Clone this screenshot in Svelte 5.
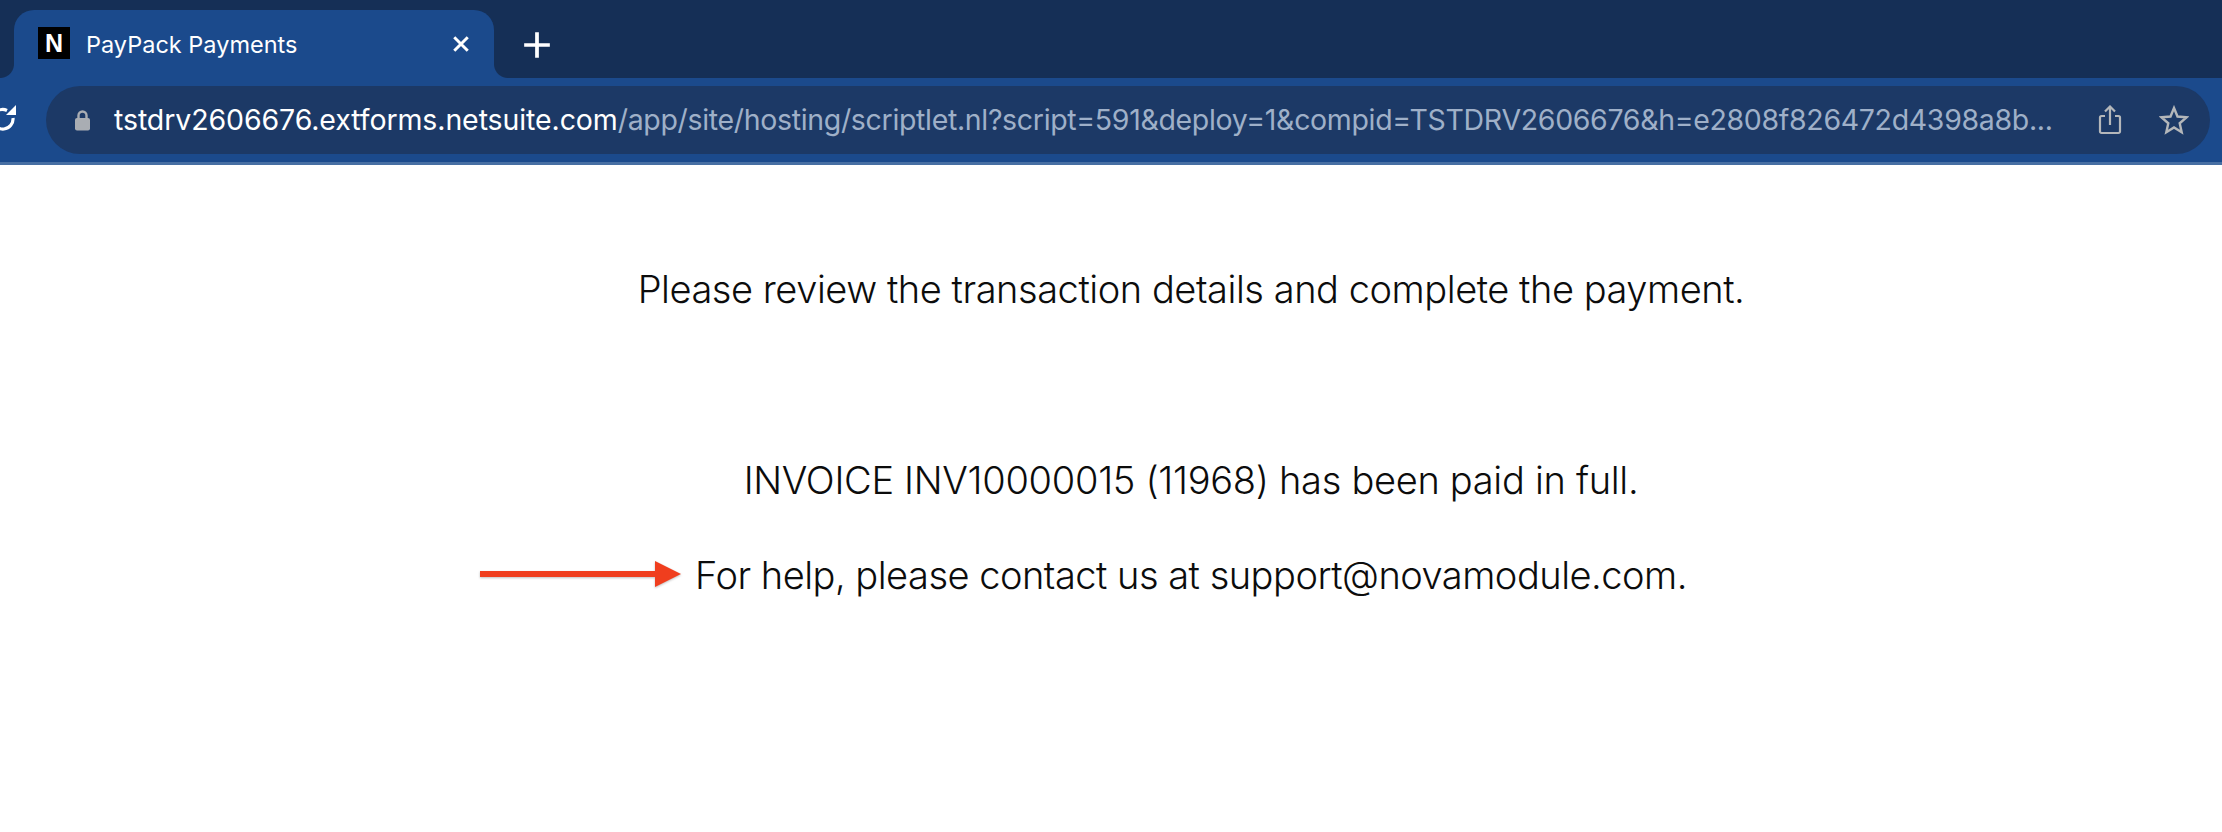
<script>
  const host = 'tstdrv2606676.extforms.netsuite.com';
  const path = '/app/site/hosting/scriptlet.nl?script=591&deploy=1&compid=TSTDRV2606676&h=e2808f826472d4398a8b...';
</script>

<div class="page">
  <header class="strip">
    <div class="tab">
      <span class="favicon">N</span>
      <span class="title">PayPack Payments</span>
      <svg class="close" viewBox="0 0 16 16"><path d="M2 2L14 14M14 2L2 14" /></svg>
    </div>
    <svg class="plus" viewBox="0 0 24 24"><path d="M12 1V23M1 12H23" /></svg>
  </header>
  <div class="toolbar">
    <svg class="reload" viewBox="0 0 18 30">
      <path class="ring" d="M13 15A10 10 0 0 1 -7 17" />
      <path class="ring" d="M-5 10A10 10 0 0 1 7 7.500" />
      <path class="head" d="M6 12H16V2Z" />
    </svg>
    <div class="omnibox">
      <svg class="lock" viewBox="0 0 17 22">
        <path class="shackle" d="M4.500 10V6.500A4 4 0 0 1 12.500 6.500V10" />
        <rect x="1" y="9" width="15" height="12.500" rx="2" />
      </svg>
      <span class="url"><b>{host}</b><span class="path">{path}</span></span>
      <svg class="share" viewBox="0 0 24 30">
        <path d="M7 11H3.500A1.500 1.500 0 0 0 2 12.500V26.500A1.500 1.500 0 0 0 3.500 28H20.500A1.500 1.500 0 0 0 22 26.500V12.500A1.500 1.500 0 0 0 20.500 11H17" />
        <path d="M12 20V2M7 6.500L12 1.500L17 6.500" />
      </svg>
      <svg class="star" viewBox="0 0 30 30">
        <path d="M15 3L18.500 11.500L27.500 12.300L20.700 18.300L22.700 27.200L15 22.500L7.300 27.200L9.300 18.300L2.500 12.300L11.500 11.500Z" />
      </svg>
    </div>
  </div>
  <main class="content">
    <p class="intro">Please review the transaction details and complete the payment.</p>
    <p class="paid">INVOICE INV10000015 (11968) has been paid in full.</p>
    <p class="help">
      <svg class="arrow" viewBox="0 0 202 28">
        <path class="shaft" d="M0 14H176" />
        <path class="tip" d="M175 1L201 14L175 27Z" />
      </svg>
      For help, please contact us at support@novamodule.com.
    </p>
  </main>
</div>

<style>
  :global(body) {
    margin: 0;
    background: #ffffff;
  }
  .page {
    font-family: Inter, "Liberation Sans", sans-serif;
    height: 832px;
    overflow: hidden;
  }
  .strip {
    box-sizing: border-box;
    height: 78px;
    background: #152f56;
    padding: 10px 0 0 14px;
    display: flex;
    align-items: center;
  }
  .tab {
    box-sizing: border-box;
    width: 480px;
    height: 68px;
    align-self: flex-end;
    position: relative;
    background: #1b4a8c;
    border-radius: 20px 20px 0 0;
    display: flex;
    align-items: center;
    padding: 0 24px;
    color: #fff;
  }
  .tab::before,
  .tab::after {
    content: "";
    position: absolute;
    bottom: 0;
    width: 14px;
    height: 14px;
  }
  .tab::before {
    left: -14px;
    background: radial-gradient(circle at 0 0, #152f56 13.500px, #1b4a8c 14.500px);
  }
  .tab::after {
    right: -14px;
    background: radial-gradient(circle at 100% 0, #152f56 13.500px, #1b4a8c 14.500px);
  }
  .favicon {
    height: 32px;
    width: 32px;
    margin-top: -2px;
    background: #000;
    color: #fff;
    font: 700 25px "Liberation Sans", sans-serif;
    display: flex;
    align-items: center;
    justify-content: center;
    flex: none;
  }
  .title {
    margin-left: 16px;
    font-size: 23.500px;
    flex: 1;
    white-space: nowrap;
  }
  .close {
    width: 18px;
    height: 18px;
    fill: none;
    stroke: #fff;
    stroke-width: 2.600;
  }
  .plus {
    width: 28px;
    height: 28px;
    margin: 1px 0 0 29px;
    fill: none;
    stroke: #fff;
    stroke-width: 3.200;
  }
  .toolbar {
    box-sizing: border-box;
    height: 87px;
    background: #1b4a8c;
    border-bottom: 3px solid #476fa3;
    padding-top: 8px;
    display: flex;
    align-items: flex-start;
  }
  .reload {
    width: 18px;
    height: 30px;
    margin-top: 17px;
    flex: none;
    fill: none;
  }
  .ring {
    fill: none;
    stroke: #fff;
    stroke-width: 3.200;
  }
  .head {
    fill: #fff;
  }
  .omnibox {
    box-sizing: border-box;
    width: 2164px;
    height: 68px;
    margin-left: 28px;
    background: #1c3966;
    border-radius: 34px;
    display: flex;
    align-items: center;
    padding-left: 28px;
  }
  .lock {
    width: 17px;
    height: 22px;
    flex: none;
    fill: #a9adb3;
  }
  .shackle {
    fill: none;
    stroke: #a9adb3;
    stroke-width: 2.400;
  }
  .url {
    margin-left: 23px;
    margin-bottom: 2px;
    font-size: 28.500px;
    color: #9fb0c8;
    white-space: nowrap;
    width: 1950px;
    flex: none;
  }
  .url b {
    font-weight: 400;
    color: #ffffff;
    letter-spacing: -0.100px;
  }
  .path {
    letter-spacing: -0.330px;
  }
  .share {
    width: 24px;
    height: 30px;
    flex: none;
    fill: none;
    stroke: #b4b7ba;
    stroke-width: 2.200;
    margin-left: 34px;
  }
  .star {
    width: 30px;
    height: 30px;
    flex: none;
    margin-left: 37px;
    fill: none;
    stroke: #b4b7ba;
    stroke-width: 2.400;
  }
  .content {
    box-sizing: border-box;
    padding-left: 160px;
    text-align: center;
    color: #0c0c0c;
    font-size: 38px;
    font-weight: 300;
    line-height: 46px;
    letter-spacing: -0.450px;
  }
  .content p {
    margin: 0;
    white-space: nowrap;
  }
  .intro {
    padding-top: 101px;
  }
  .content .paid {
    margin-top: 145px;
    letter-spacing: -0.300px;
  }
  .content .help {
    margin-top: 49px;
    position: relative;
    letter-spacing: -0.500px;
  }
  .arrow {
    position: absolute;
    left: 320px;
    top: 8px;
    width: 202px;
    height: 28px;
    filter: drop-shadow(0 1px 1px rgba(0, 0, 0, 0.25));
  }
  .shaft {
    stroke: #f03e1e;
    stroke-width: 6;
    fill: none;
  }
  .tip {
    fill: #f03e1e;
  }
</style>
